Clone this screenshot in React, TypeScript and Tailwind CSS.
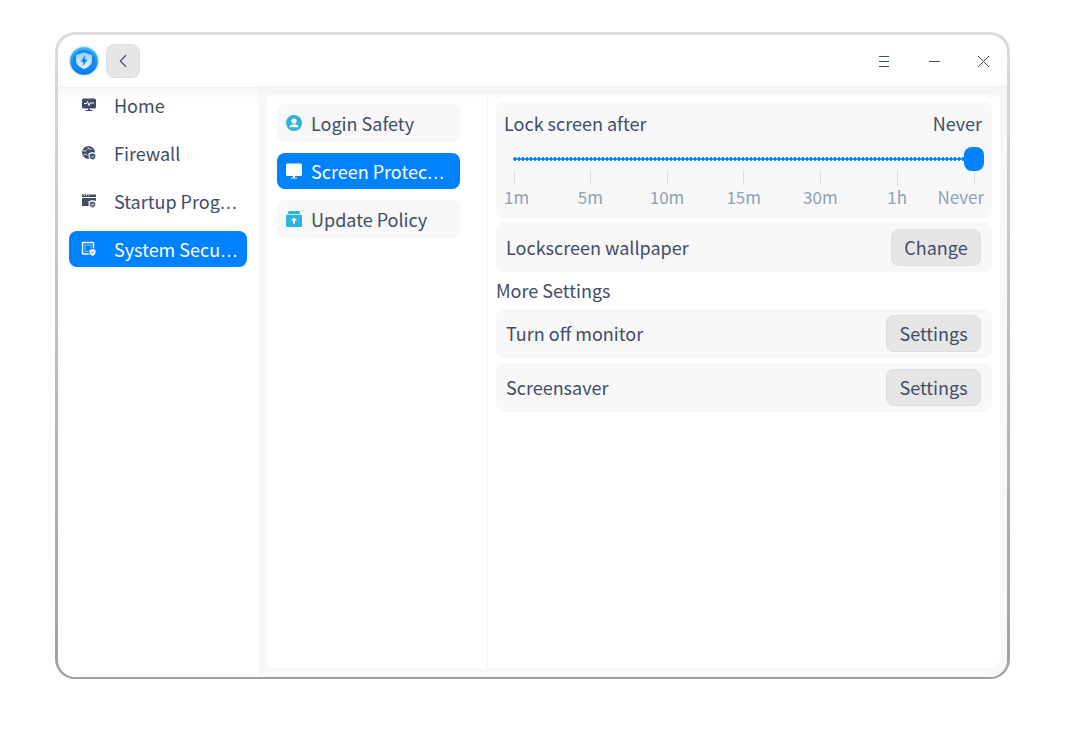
import { ChevronLeft } from 'lucide-react'
import type { ReactNode } from 'react'

const font = { fontFamily: '"Noto Sans CJK SC", "Noto Sans", sans-serif' }

function AppIcon() {
  return (
    <svg width="32" height="32" viewBox="0 0 32 32">
      <defs>
        <linearGradient id="ring" x1="0" y1="0" x2="0" y2="1">
          <stop offset="0" stopColor="#38b6fc" />
          <stop offset="1" stopColor="#0a74ea" />
        </linearGradient>
        <linearGradient id="shield" x1="0" y1="0" x2="0" y2="1">
          <stop offset="0" stopColor="#8ed2fb" />
          <stop offset="1" stopColor="#e6f5fe" />
        </linearGradient>
      </defs>
      <circle cx="16" cy="16" r="15" fill="#bfe6fb" />
      <circle cx="16" cy="16" r="13.800" fill="url(#ring)" />
      <circle cx="16" cy="16" r="11" fill="#1487f0" />
      <path d="M16 7.500l8 2.500v5.500c0 4-3.500 6.800-8 8.500-4.500-1.700-8-4.500-8-8.500V10z" fill="url(#shield)" />
      <path d="M17.400 10l-4.600 6.800h2.800l-1 4.700 4.800-7h-2.900z" fill="#0e7cf0" />
    </svg>
  )
}

function HomeIcon() {
  return (
    <svg width="16" height="16" viewBox="0 0 16 16">
      <rect x="1" y="1.500" width="14" height="10" rx="1.500" fill="#414d68" />
      <path d="M3 6.500h2.500l1-2 1.500 4 1.200-2.500H13" fill="none" stroke="#fff" strokeWidth="1" />
      <path d="M7 11.500h2v1.500h2.500v1h-7v-1H7z" fill="#414d68" />
    </svg>
  )
}

function BadgeShield({ fill, check }: { fill: string; check: string }) {
  return (
    <>
      <path d="M11.500 7l4 1.300v3.200c0 2.200-1.700 3.600-4 4.500-2.300-.9-4-2.300-4-4.500V8.300z" fill="#fff" />
      <path d="M11.500 8.400l2.800.9v2.300c0 1.500-1.200 2.500-2.800 3.100-1.600-.6-2.800-1.600-2.800-3.100V9.300z" fill={fill} />
      <path d="M10.200 11.200l1 1.100 1.700-1.800" fill="none" stroke={check} strokeWidth="0.900" />
    </>
  )
}

function FirewallIcon() {
  return (
    <svg width="16" height="16" viewBox="0 0 16 16">
      <circle cx="7.500" cy="7.500" r="6.500" fill="#414d68" />
      <path d="M2 5.500c2 1 3 .5 4-1M7 2c0 2 1.500 2.500 3.500 2M2.500 10c1.500-1 3-1 4 .5" fill="none" stroke="#fff" strokeWidth="0.900" />
      <BadgeShield fill="#414d68" check="#fff" />
    </svg>
  )
}

function StartupIcon() {
  return (
    <svg width="16" height="16" viewBox="0 0 16 16">
      <path d="M1 1.500h14v2.500H1z" fill="#414d68" />
      <path d="M3 2.500h1M5 2.500h1M7 2.500h1" stroke="#c5cad3" strokeWidth="1" />
      <path d="M1 5h14v8H1z" fill="#414d68" />
      <BadgeShield fill="#5b6679" check="#fff" />
    </svg>
  )
}

function SystemIcon() {
  return (
    <svg width="16" height="16" viewBox="0 0 16 16">
      <rect x="1.500" y="1.500" width="11" height="11.500" rx="0.500" fill="none" stroke="#fff" strokeWidth="1.400" />
      <rect x="4" y="4" width="6" height="6.500" fill="none" stroke="#fff" strokeWidth="0.700" opacity="0.700" />
      <path d="M11.500 7l4 1.300v3.200c0 2.200-1.700 3.600-4 4.500-2.300-.9-4-2.300-4-4.500V8.300z" fill="#0081ff" />
      <path d="M11.500 8l3 1v2.500c0 1.600-1.300 2.700-3 3.400-1.700-.7-3-1.800-3-3.400V9z" fill="#fff" />
      <path d="M10.200 11.200l1 1.100 1.700-1.800" fill="none" stroke="#0081ff" strokeWidth="0.900" />
    </svg>
  )
}

function UserIcon() {
  return (
    <svg width="16" height="16" viewBox="0 0 16 16">
      <circle cx="8" cy="8" r="8" fill="#2eb4dc" />
      <circle cx="8" cy="6" r="2.600" fill="#fff" />
      <path d="M3.500 12.200c0-2 2-3 4.500-3s4.500 1 4.500 3z" fill="#fff" />
    </svg>
  )
}

function ScreenIcon() {
  return (
    <svg width="16" height="16" viewBox="0 0 16 16">
      <rect x="0" y="0.500" width="16" height="12.500" rx="1.500" fill="#fff" />
      <path d="M5 14.500h6v1H5z" fill="#fff" />
      <path d="M7 13h2v1.500H7z" fill="#fff" />
    </svg>
  )
}

function UpdateIcon() {
  return (
    <svg width="16" height="16" viewBox="0 0 16 16">
      <path d="M2 1.500A1.500 1.500 0 0 1 3.500 0h9A1.500 1.500 0 0 1 14 1.500V3H2z" fill="#2eb4dc" />
      <path d="M0 3.800h16V14.500a1.500 1.500 0 0 1-1.500 1.500h-13A1.500 1.500 0 0 1 0 14.500z" fill="#2eb4dc" />
      <path d="M8 6.500l3 3H9v3H7v-3H5z" fill="#fff" />
    </svg>
  )
}

function Label({ text, more, lift }: { text: string; more?: boolean; lift?: boolean }) {
  return (
    <span className={`whitespace-nowrap text-[18px] leading-none ${lift ? 'pb-[2px]' : ''}`}>
      {text}
      {more && <span className="text-[16px]">⋯</span>}
    </span>
  )
}

function NavItem({ icon, label, more, active }: { icon: ReactNode; label: string; more?: boolean; active?: boolean }) {
  return (
    <div
      className={`flex h-9 items-center rounded-lg pl-[12px] pr-2 ${
        active ? 'bg-[#0081ff] text-white' : 'text-[#414d68]'
      }`}
    >
      <span className="mr-[17px] flex w-[16px] shrink-0 justify-center">{icon}</span>
      <Label text={label} more={more} />
    </div>
  )
}

function SubItem({ icon, label, more, active }: { icon: ReactNode; label: string; more?: boolean; active?: boolean }) {
  return active ? (
    <div className="flex h-[38px] items-center">
      <div className="flex h-9 w-[183px] items-center rounded-lg bg-[#0081ff] pl-[9px] text-white">
        <span className="mr-[9px] flex w-[16px] shrink-0">{icon}</span>
        <Label text={label} more={more} />
      </div>
    </div>
  ) : (
    <div className="flex h-[38px] w-[184px] items-center rounded-lg bg-[#f8f8f8] pl-[9px] text-[#414d68]">
      <span className="mr-[9px] flex w-[16px] shrink-0">{icon}</span>
      <Label text={label} more={more} />
    </div>
  )
}

function SettingRow({ label, action, buttonWidth }: { label: string; action: string; buttonWidth: string }) {
  return (
    <div className="flex h-[49px] items-center justify-between rounded-lg bg-[#f8f8f8] pl-[10px] pr-[11px] text-[#414d68]">
      <Label text={label} lift />
      <button
        className={`flex h-[37px] items-center justify-center rounded-lg border border-[#dcdcdc] bg-[#e6e6e6] ${buttonWidth}`}
      >
        <Label text={action} lift />
      </button>
    </div>
  )
}

const marks = ['5m', '10m', '15m', '30m', '1h']

function LockSlider() {
  return (
    <div className="h-[116px] rounded-lg bg-[#f8f8f8] px-2">
      <div className="flex h-[44px] items-center justify-between pr-[2px] text-[#414d68]">
        <Label text="Lock screen after" lift />
        <Label text="Never" lift />
      </div>
      <div className="relative h-[25px] pt-[11px]">
        <div className="ml-[9px] mr-[19px] h-[4px] bg-[radial-gradient(circle,#0081ff_1.5px,transparent_2px)] bg-[length:4px_4px]" />
        <div className="absolute right-0 top-[1px] h-6 w-5 rounded-lg bg-[#0081ff]" />
      </div>
      <div className="flex h-[14px] w-[480px]">
        <div className="w-[48px] pl-[10px]">
          <div className="h-[14px] w-px bg-[#dcdcdc]" />
        </div>
        {marks.map((m) => (
          <div key={m} className="flex w-[76.7px] justify-center">
            <div className="h-[14px] w-px bg-[#dcdcdc]" />
          </div>
        ))}
        <div className="flex flex-1 justify-end pr-[9px]">
          <div className="h-[14px] w-px bg-[#dcdcdc]" />
        </div>
      </div>
      <div className="flex w-[480px] pt-[3px] text-[17px] leading-[18px] text-[#8fa1b5]">
        <div className="w-[48px]">1m</div>
        {marks.map((m) => (
          <div key={m} className="w-[76.7px] text-center">
            {m}
          </div>
        ))}
        <div className="flex-1 whitespace-nowrap text-right">Never</div>
      </div>
    </div>
  )
}

export default function App() {
  return (
    <div className="h-[745px] w-[1075px] overflow-hidden bg-white pl-[55px] pt-[32px]" style={font}>
      <div className="h-[647px] w-[955px] rounded-[20px] bg-gradient-to-b from-[#dcdcdc] to-[#a0a0a0] p-[3px] pb-[2px]">
        <div className="flex h-full w-full flex-col overflow-hidden rounded-[17px] bg-white">
          {/* Titlebar */}
          <div className="flex h-[51px] shrink-0 items-center pl-[10px] pr-[15px]">
            <AppIcon />
            <button className="ml-[6px] flex h-[34px] w-[34px] items-center justify-center rounded-lg border border-[#dedede] bg-[#e6e6e6] text-[#414d68]">
              <ChevronLeft size={22} strokeWidth={1.2} />
            </button>
            <div className="ml-auto flex items-center">
              <svg width="50" height="18" viewBox="0 0 50 18" stroke="#414d68" strokeWidth="1" fill="none">
                <path d="M19 4.500h10M19 9.500h10M19 14.500h10" />
              </svg>
              <svg width="50" height="18" viewBox="0 0 50 18" stroke="#414d68" strokeWidth="1" fill="none">
                <path d="M19 9.500h11" />
              </svg>
              <svg width="32" height="18" viewBox="0 0 32 18" stroke="#414d68" strokeWidth="1" fill="none">
                <path d="M18 4l11 11M29 4l-11 11" />
              </svg>
            </div>
          </div>

          <div className="relative flex min-h-0 flex-1">
            <div className="pointer-events-none absolute inset-x-0 top-0 h-[12px] bg-gradient-to-b from-[#f5f5f5] to-transparent" />
            {/* Sidebar */}
            <div className="flex w-[200px] shrink-0 flex-col gap-3 pl-[11px] pr-[11px] pt-[1px]">
              <NavItem icon={<HomeIcon />} label="Home" />
              <NavItem icon={<FirewallIcon />} label="Firewall" />
              <NavItem icon={<StartupIcon />} label="Startup Prog" more />
              <NavItem icon={<SystemIcon />} label="System Secu" more active />
            </div>

            {/* Content */}
            <div className="min-w-0 flex-1 bg-[#f8f8f8] pb-[9px] pl-2 pr-[7px] pt-2">
              <div className="flex h-full overflow-hidden rounded-lg bg-white">
                <div className="flex w-[222px] shrink-0 flex-col gap-[10px] border-r border-[#f3f3f3] pl-[11px] pt-[10px]">
                  <SubItem icon={<UserIcon />} label="Login Safety" />
                  <SubItem icon={<ScreenIcon />} label="Screen Protec" more active />
                  <SubItem icon={<UpdateIcon />} label="Update Policy" />
                </div>
                <div className="ml-2 flex w-[496px] flex-col pt-2">
                  <LockSlider />
                  <div className="mt-[5px]">
                    <SettingRow label="Lockscreen wallpaper" action="Change" buttonWidth="w-[90px]" />
                  </div>
                  <div className="h-[37px] pt-[8px] text-[18px] leading-[20px] text-[#414d68]">More Settings</div>
                  <SettingRow label="Turn off monitor" action="Settings" buttonWidth="w-[95px]" />
                  <div className="mt-[5px]">
                    <SettingRow label="Screensaver" action="Settings" buttonWidth="w-[95px]" />
                  </div>
                </div>
              </div>
            </div>
          </div>
        </div>
      </div>
    </div>
  )
}
